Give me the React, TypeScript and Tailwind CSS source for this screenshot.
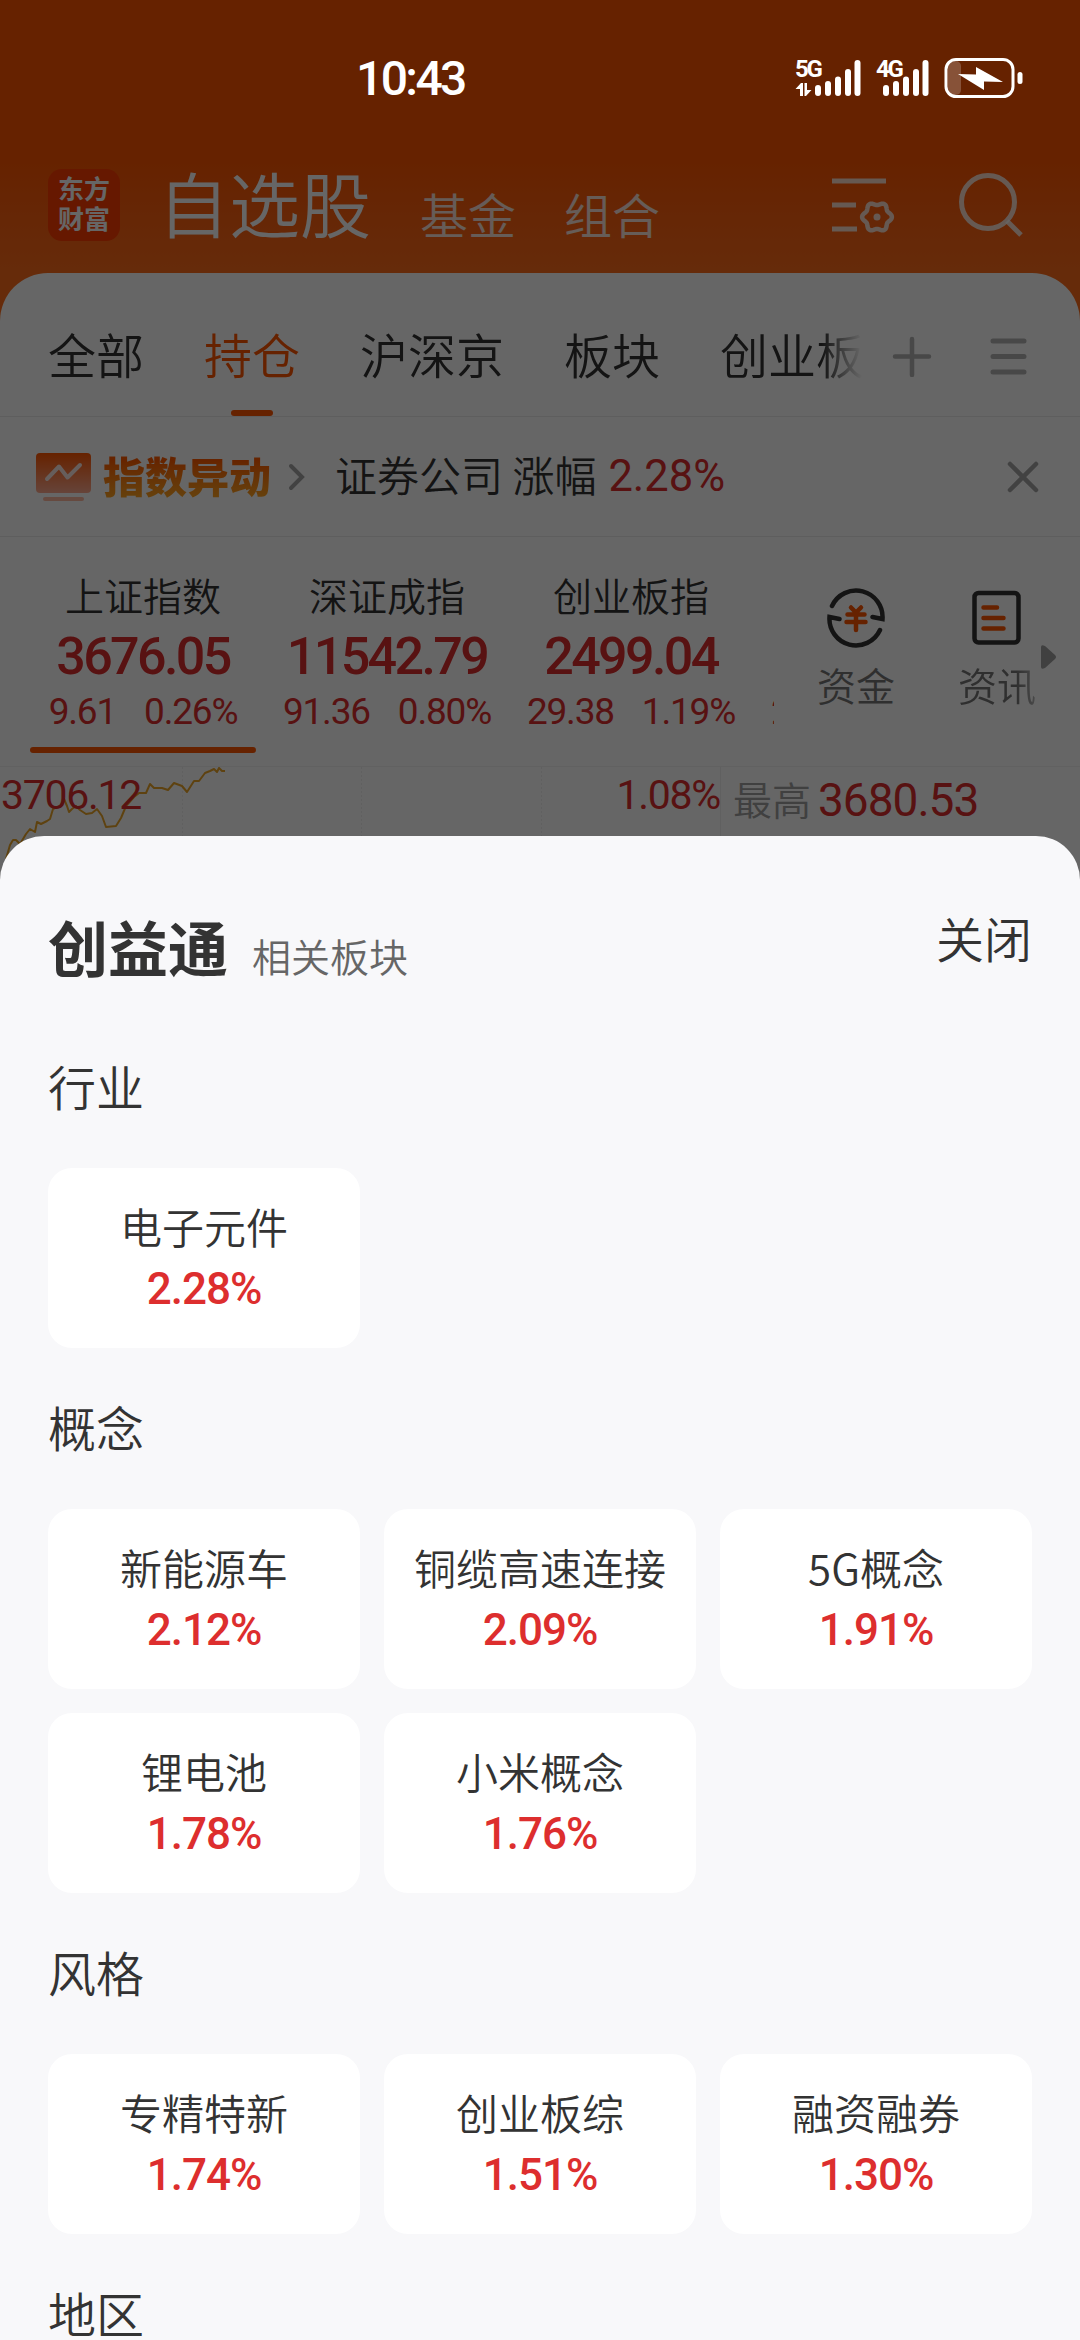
import React from "react";

type Board = { name: string; change: string };

const sections: { title: string; boards: Board[] }[] = [
  { title: "行业", boards: [{ name: "电子元件", change: "2.28%" }] },
  {
    title: "概念",
    boards: [
      { name: "新能源车", change: "2.12%" },
      { name: "铜缆高速连接", change: "2.09%" },
      { name: "5G概念", change: "1.91%" },
      { name: "锂电池", change: "1.78%" },
      { name: "小米概念", change: "1.76%" },
    ],
  },
  {
    title: "风格",
    boards: [
      { name: "专精特新", change: "1.74%" },
      { name: "创业板综", change: "1.51%" },
      { name: "融资融券", change: "1.30%" },
    ],
  },
  { title: "地区", boards: [] },
];

const indexes = [
  { name: "上证指数", value: "3676.05", diff: "9.61", pct: "0.26%", active: true },
  { name: "深证成指", value: "11542.79", diff: "91.36", pct: "0.80%" },
  { name: "创业板指", value: "2499.04", diff: "29.38", pct: "1.19%" },
];

const tabs = ["全部", "持仓", "沪深京", "板块", "创业板"];

// six-lobed outline of the settings gear
const gearPath = (cx: number, cy: number) =>
  Array.from({ length: 72 }, (_, i) => {
    const a = (i / 72) * Math.PI * 2;
    const r = 13.4 + 1.5 * Math.cos(6 * a);
    return `${i ? "L" : "M"}${(cx + r * Math.cos(a)).toFixed(2)} ${(cy + r * Math.sin(a)).toFixed(2)}`;
  }).join("") + "Z";

function SignalBars() {
  return (
    <svg width="46" height="36" viewBox="0 0 46 36" fill="#fff">
      <rect x="0" y="25" width="6" height="11" rx="3" />
      <rect x="10" y="21" width="6" height="15" rx="3" />
      <rect x="20" y="16.500" width="6" height="19.500" rx="3" />
      <rect x="30" y="9" width="6" height="27" rx="3" />
      <rect x="39.500" y="0" width="6" height="36" rx="3" />
    </svg>
  );
}

function Battery() {
  return (
    <svg width="80" height="42" viewBox="0 0 80 42">
      <rect x="5" y="4" width="13" height="34" rx="5" fill="#fff" fillOpacity="0.22" />
      <rect x="3" y="2.500" width="67" height="37" rx="10" fill="none" stroke="#fff" strokeWidth="3" />
      <path d="M15 17L33 17.500V10L60 25L41 24.500V33Z" fill="#fff" />
      <rect x="74.500" y="15" width="5" height="12" rx="2.500" fill="#fff" />
    </svg>
  );
}

function StatusBar() {
  return (
    <div className="absolute inset-x-0 top-0 z-20 flex h-[156px] items-center text-white">
      <span className="ml-[356px] w-[439px] pt-px font-['Roboto'] text-[48px] leading-none font-medium tracking-[-2.6px]">
        10:43
      </span>
      <div className="flex h-9 items-end">
        <div className="flex h-9 w-5 flex-col justify-between">
          <span className="font-['Roboto'] text-[24px] leading-[18px] font-bold tracking-[-2.2px]">5G</span>
          <svg width="17" height="13" viewBox="0 0 17 13" fill="#fff">
            <path d="M8 0V13H5V6H0.500L6 0ZM9.500 0H12V7H16.500L11 13H9.500Z" />
          </svg>
        </div>
        <SignalBars />
      </div>
      <div className="ml-[15px] flex h-9 items-end">
        <div className="flex h-9 w-[7px] flex-col">
          <span className="font-['Roboto'] text-[24px] leading-[18px] font-bold tracking-[-2.2px]">4G</span>
        </div>
        <SignalBars />
      </div>
      <div className="ml-[14px]">
        <Battery />
      </div>
    </div>
  );
}

function Header() {
  return (
    <div className="flex h-[273px] items-end bg-linear-to-b from-[#ff5500] from-58% to-[#ff6c1a]">
      <div className="mb-8 ml-12 flex h-[72px] w-[72px] flex-col items-center justify-center rounded-[14px] bg-[#ff3d00] pb-[4px] text-[26px] leading-[30px] font-bold text-white">
        <span>东方</span>
        <span>财富</span>
      </div>
      <span className="mb-[36px] ml-[38px] w-[218px] text-[71px] leading-[72px] text-white">自选股</span>
      <span className="mb-[36px] ml-[44px] text-[48px] leading-[48px] text-white/85">基金</span>
      <span className="mb-[36px] ml-[48px] text-[48px] leading-[48px] text-white/85">组合</span>
      <svg className="mb-7 ml-[170px]" width="68" height="72" viewBox="0 0 68 72" fill="none" stroke="#fff" strokeOpacity="0.8" strokeWidth="5">
        <path d="M2 8H56M2 32H26M2 56H27" />
        <path d={gearPath(47, 44)} strokeWidth="4.500" strokeLinejoin="round" />
        <circle cx="47" cy="44" r="3.500" fill="#fff" fillOpacity="0.8" stroke="none" />
      </svg>
      <svg className="mb-8 ml-[58px]" width="70" height="72" viewBox="0 0 70 72" fill="none" stroke="#fff" strokeOpacity="0.8" strokeWidth="5">
        <circle cx="32" cy="33" r="26.500" />
        <path d="M51 52L65 66" />
      </svg>
    </div>
  );
}

function TabBar() {
  return (
    <div className="flex h-36 items-stretch border-b border-[#ececec] pl-12">
      <div className="flex w-[814px] gap-[60px] overflow-hidden mask-r-from-95% text-[48px] whitespace-nowrap text-[#333]">
        {tabs.map((tab) =>
          tab === "持仓" ? (
            <div key={tab} className="flex flex-col items-center justify-between text-[#ff5500]">
              <span className="leading-[161px]">{tab}</span>
              <span className="-mt-[25px] h-[6px] w-[42px] shrink-0 rounded-full bg-[#ff5500]" />
            </div>
          ) : (
            <span key={tab} className="leading-[161px]">{tab}</span>
          )
        )}
      </div>
      <svg className="mt-[62px] ml-[29px]" width="42" height="42" viewBox="0 0 42 42" stroke="#b4b4b4" strokeWidth="4.500" strokeLinecap="round">
        <path d="M4 21.500H38M21 4V40" />
      </svg>
      <svg className="mt-[62px] ml-14" width="42" height="42" viewBox="0 0 42 42" stroke="#b4b4b4" strokeWidth="5" strokeLinecap="round">
        <path d="M4 6H35M4 21.500H35M4 37H35" />
      </svg>
    </div>
  );
}

function NoticeBar() {
  return (
    <div className="flex h-[120px] items-center border-b border-[#ececec] pl-9">
      <svg width="55" height="50" viewBox="0 0 55 50" fill="none">
        <defs>
          <linearGradient id="badge" x1="0" y1="0" x2="0" y2="1">
            <stop offset="0" stopColor="#ff5500" />
            <stop offset="1" stopColor="#ffaa90" />
          </linearGradient>
        </defs>
        <rect x="0" y="1" width="55" height="40" rx="4" fill="url(#badge)" />
        <rect x="7" y="45" width="41" height="4" rx="2" fill="#ffb9a0" />
        <path d="M11 27L23 14.500L31.500 25.500L44 13" stroke="#ffece5" strokeWidth="4" strokeLinecap="round" strokeLinejoin="round" />
      </svg>
      <span className="mb-1 ml-3 bg-linear-to-b from-[#ff5a00] from-25% to-[#ffa01e] to-85% bg-clip-text text-[42px] leading-[60px] font-black text-transparent">
        指数异动
      </span>
      <svg className="ml-[17px]" width="18" height="30" viewBox="0 0 18 30" fill="none" stroke="#a5a5a5" strokeWidth="4" strokeLinecap="round">
        <path d="M3 4L14 15L3 26" />
      </svg>
      <span className="mb-[5px] ml-[29px] text-[42px] leading-[60px] text-[#333]">证券公司 涨幅</span>
      <span className="ml-3 font-['Roboto'] text-[43.500px] leading-[60px] font-normal text-[#dd2e2e]">2.28%</span>
      <svg className="mr-10 ml-auto" width="34" height="34" viewBox="0 0 34 34" stroke="#a5a5a5" strokeWidth="4.500" strokeLinecap="round">
        <path d="M4 4L30 30M30 4L4 30" />
      </svg>
    </div>
  );
}

function IndexStrip() {
  return (
    <div className="flex h-[230px] border-b border-[#f2f2f2]">
      <div className="flex w-[774px] overflow-hidden pl-[21px]">
        {indexes.map((item) => (
          <div key={item.name} className="flex w-[244px] shrink-0 flex-col items-center pt-8">
            <span className="text-[39px] leading-[50px] text-[#333]">{item.name}</span>
            <span className="mt-2 font-['Roboto'] text-[52px] leading-[60px] font-medium tracking-[-2.6px] text-[#dd2e2e]">
              {item.value}
            </span>
            <div className="mt-1 flex gap-[28px] font-['Roboto'] text-[37px] leading-[42px] font-normal tracking-[-1.2px] text-[#dd2e2e]">
              <span>{item.diff}</span>
              <span>{item.pct}</span>
            </div>
            {item.active && <span className="mt-[14px] h-[6px] w-[226px] rounded-full bg-[#ff5500]" />}
          </div>
        ))}
        <span className="mt-[154px] ml-[18px] font-['Roboto'] text-[37px] leading-[42px] font-normal text-[#dd2e2e]">2</span>
      </div>
      <div className="ml-[43px] flex flex-col items-center pt-[50px]">
        <svg width="62" height="62" viewBox="0 0 62 62" fill="none" stroke="#333" strokeWidth="4.500">
          <path d="M7 19A26.500 26.500 0 0 1 57.500 32L47.500 30" strokeLinecap="round" />
          <path d="M55 43A26.500 26.500 0 0 1 4.500 30L14.500 32" strokeLinecap="round" />
          <path d="M26 20.500L31 25.500L36 20.500M22.500 27.500H39.500M21.500 35H40.500M31 25.500V43" stroke="#ff5500" strokeLinecap="round" />
        </svg>
        <span className="mt-[12px] text-[39px] leading-[46px] text-[#777]">资金</span>
      </div>
      <div className="ml-[63px] flex flex-col items-center pt-[50px]">
        <svg width="62" height="62" viewBox="0 0 62 62" fill="none" stroke="#333" strokeWidth="4.500">
          <rect x="8.500" y="6" width="44" height="49.500" rx="4" />
          <path d="M17.500 20.500H31M17.500 31H37.500M17.500 41.500H37.500" stroke="#ff5500" strokeLinecap="round" />
        </svg>
        <span className="mt-[12px] mask-r-from-75% mask-r-to-125% text-[39px] leading-[46px] text-[#777]">资讯</span>
      </div>
      <svg className="mt-[106px] ml-[5px]" width="16" height="28" viewBox="0 0 16 28" fill="#a0a0a0">
        <path d="M0 4Q0 1 4 3L14 12Q16 14 14 16L4 25Q0 27 0 24Z" />
      </svg>
    </div>
  );
}

function ChartStrip() {
  return (
    <div className="flex h-[120px]">
      <div className="relative flex w-[721px] items-start justify-between border-r border-[#efefef] pt-[6px] pl-px font-['Roboto'] text-[41px] leading-[44px] font-normal tracking-[-1.3px] text-[#dd2e2e]">
        <svg className="absolute top-0 left-0" width="720" height="120" viewBox="0 0 720 120" fill="none">
          <path d="M182.500 0V120M361.500 0V120M541.500 0V120" stroke="#efefef" strokeDasharray="2 2" />
          <path
            d="M6 92L10 78L13 73L16 73L20 77L26 67L30 62L35 65L37 55L41 57L47 54L50 52L53 42L57 40L61 39L64 32L67 39L69 45L72 42L76 39L80 43L86 47L92 46L97 42L102 49L106 60L116 59L121 51L126 39L134 30L139 26L146 26L150 17L154 21L162 21L168 23L174 16L182 19L187 25L194 14L199 14L205 6L210 4L214 2L217 5L219 1L222 4L225 4"
            stroke="#eca62a"
            strokeWidth="2"
            strokeLinejoin="round"
          />
        </svg>
        <span className="relative">3706.12</span>
        <span className="relative">1.08%</span>
      </div>
      <div className="flex items-start gap-[7px] pt-[6px] pl-[12px]">
        <span className="text-[39px] leading-[50px] text-[#a0a0a0]">最高</span>
        <span className="pt-px font-['Roboto'] text-[46px] leading-[52px] font-normal tracking-[-1px] text-[#dd2e2e]">3680.53</span>
      </div>
    </div>
  );
}

function BoardCard({ name, change }: Board) {
  return (
    <div className="flex h-[180px] flex-col items-center rounded-3xl bg-white pt-7">
      <span className="text-[42px] leading-[60px] text-[#333]">{name}</span>
      <span className="mt-[2px] font-['Roboto'] text-[44px] leading-[62px] font-medium tracking-[-1px] text-[#dd2e2e]">{change}</span>
    </div>
  );
}

function RelatedSheet() {
  return (
    <div className="absolute inset-x-0 top-[836px] bottom-0 z-10 overflow-hidden rounded-t-[44px] bg-[#f8f8fa] px-12">
      <div className="flex h-[171px] items-start pt-[70px]">
        <span className="text-[60px] leading-[80px] font-bold text-[#333]">创益通</span>
        <span className="mt-[17px] ml-6 text-[39px] leading-[64px] text-[#666]">相关板块</span>
        <span className="-mt-px ml-auto text-[48px] leading-[64px] text-[#333]">关闭</span>
      </div>
      {sections.map((section) => (
        <div key={section.title}>
          <div className="h-[161px] text-[48px] leading-[156px] text-[#333]">{section.title}</div>
          <div className="grid grid-cols-3 gap-6">
            {section.boards.map((board) => (
              <BoardCard key={board.name} {...board} />
            ))}
          </div>
        </div>
      ))}
    </div>
  );
}

export default function App() {
  return (
    <div className="relative h-[2340px] w-[1080px] overflow-hidden bg-white font-['Noto_Sans_CJK_SC',sans-serif] font-[350]">
      <Header />
      <div className="bg-[#ff6c1a]">
        <div className="rounded-t-[48px] bg-white">
          <TabBar />
          <NoticeBar />
          <IndexStrip />
          <ChartStrip />
        </div>
      </div>
      <div className="absolute inset-0 bg-black/60" />
      <StatusBar />
      <RelatedSheet />
    </div>
  );
}
